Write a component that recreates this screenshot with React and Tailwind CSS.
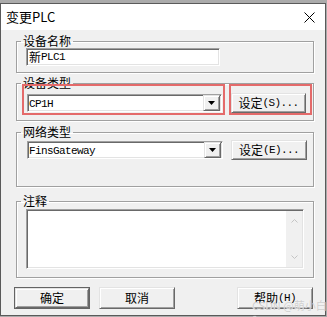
import React from "react";

const CJK = /[\u4e00-\u9fff]/;

function Mixed({ text }) {
  const parts = text.match(/[\u4e00-\u9fff]+|[^\u4e00-\u9fff]+/g) || [];
  return (
    <>
      {parts.map((p, i) =>
        CJK.test(p) ? (
          <span key={i} className="font-['Noto_Sans_CJK_SC',sans-serif] text-[12px]">
            {p}
          </span>
        ) : (
          <span key={i} className="font-['Liberation_Mono',monospace] text-[11px] tracking-[-0.6px]">
            {p}
          </span>
        )
      )}
    </>
  );
}

const base = "font-['Noto_Sans_CJK_SC',sans-serif] text-[12px] leading-[14px] text-black";

const sunken =
  "border border-t-[#a0a0a0] border-l-[#a0a0a0] border-r-white border-b-white shadow-[inset_1px_1px_0_#696969,inset_-1px_-1px_0_#e3e3e3]";
const raised =
  "border border-t-[#e3e3e3] border-l-[#e3e3e3] border-r-[#696969] border-b-[#696969] shadow-[inset_1px_1px_0_#ffffff,inset_-1px_-1px_0_#a0a0a0] bg-[#f0f0f0]";

function Group({ label, children, className = "" }) {
  return (
    <fieldset
      className={
        "relative ml-[15px] w-[298px] border border-[#a0a0a0] shadow-[inset_1px_1px_0_#ffffff,1px_1px_0_#ffffff] " +
        className
      }
    >
      <legend className={"ml-[4px] px-[2px] " + base}>{label}</legend>
      {children}
    </fieldset>
  );
}

function Combo({ value, width }) {
  return (
    <div className={"flex h-[18px] items-center bg-white " + sunken + " " + width}>
      <div className={"flex-1 pl-[1px] " + base}>
        <Mixed text={value} />
      </div>
      <div className={"mr-[1px] flex h-[16px] w-[17px] items-center justify-center " + raised}>
        <svg width="7" height="4" viewBox="0 0 7 4">
          <polygon points="0,0 7,0 3.5,4" fill="#000" />
        </svg>
      </div>
    </div>
  );
}

function Btn({ label, def = false, w = "w-[76px]", h = "h-[20px]" }) {
  const inner = (
    <div
      className={
        "flex items-center justify-center " + base + " " + raised + " " + (def ? "h-full w-full" : w + " " + h)
      }
    >
      <Mixed text={label} />
    </div>
  );
  if (def) {
    return <div className={"border border-[#646464] " + w + " " + h}>{inner}</div>;
  }
  return inner;
}

export default function App() {
  return (
    <div className="relative h-[317px] w-[327px] overflow-hidden bg-[#ababab] pt-[3px]">
      <div className="flex h-[313px] w-[326px] flex-col border border-[#5a5a5a]">
        <div className="flex h-[26px] items-center justify-between bg-white pl-[5px] pr-[10px]">
          <span className="font-['Noto_Sans_CJK_SC',sans-serif] text-[13px] leading-[16px] text-black">
            变更PLC
          </span>
          <svg width="11" height="11" viewBox="0 0 11 11">
            <path d="M0.5 0.5 L10.5 10.5 M10.5 0.5 L0.5 10.5" stroke="#000" strokeWidth="1" />
          </svg>
        </div>

        <div className={"flex flex-1 flex-col bg-[#f0f0f0] " + base}>
          <Group label="设备名称" className="mt-[4px]">
            <div className="pb-[6px] pl-[9px]">
              <div className={"flex h-[18px] w-[194px] items-center bg-white pl-[2px] " + base + " " + sunken}>
                <Mixed text="新PLC1" />
              </div>
            </div>
          </Group>

          <Group label="设备类型" className="mt-[3px]">
            <div className="mt-[3px] flex h-[20px] items-center pl-[10px]">
              <Combo value="CP1H" width="w-[195px]" />
              <div className="ml-[9px]">
                <Btn label="设定(S)..." w="w-[75px]" />
              </div>
            </div>
            <div className="h-[7px]" />
            <div className="pointer-events-none absolute left-[5px] top-[-6px] h-[31px] w-[203px] border-2 border-[#e46a6a]" />
            <div className="pointer-events-none absolute left-[212px] top-[-6px] h-[31px] w-[83px] border-2 border-[#e46a6a]" />
          </Group>

          <Group label="网络类型" className="mt-[4px]">
            <div className="mt-[1px] flex h-[20px] items-center pl-[10px]">
              <Combo value="FinsGateway" width="w-[196px]" />
              <div className="ml-[8px]">
                <Btn label="设定(E)..." w="w-[76px]" />
              </div>
            </div>
            <div className="h-[26px]" />
          </Group>

          <Group label="注释" className="mt-[7px]">
            <div className="mt-[1px] pb-[8px] pl-[9px]">
              <div className={"flex h-[60px] w-[278px] bg-white " + sunken}>
                <div className="flex-1" />
                <div className="my-[1px] mr-[1px] flex w-[16px] flex-col items-center justify-between bg-[#f0f0f0] py-[8px]">
                  <svg width="7" height="4" viewBox="0 0 7 4">
                    <polyline points="0.5,3.5 3.5,0.5 6.5,3.5" fill="none" stroke="#c4c4c4" strokeWidth="1" />
                  </svg>
                  <svg width="7" height="4" viewBox="0 0 7 4">
                    <polyline points="0.5,0.5 3.5,3.5 6.5,0.5" fill="none" stroke="#c4c4c4" strokeWidth="1" />
                  </svg>
                </div>
              </div>
            </div>
          </Group>

          <div className="mt-[9px] flex pl-[13px]">
            <Btn label="确定" def w="w-[76px]" h="h-[22px]" />
            <div className="ml-[9px]">
              <Btn label="取消" w="w-[76px]" h="h-[22px]" />
            </div>
            <div className="ml-[62px]">
              <Btn label="帮助(H)" w="w-[76px]" h="h-[22px]" />
            </div>
          </div>
        </div>
      </div>
      <div className="pointer-events-none absolute left-[252px] top-[298px] font-['Noto_Sans_CJK_SC',sans-serif] text-[11px] leading-[14px] text-[#cfcfcf] [text-shadow:0_0_1px_#ffffff]">
        CSDN @萌小白1
      </div>
    </div>
  );
}
